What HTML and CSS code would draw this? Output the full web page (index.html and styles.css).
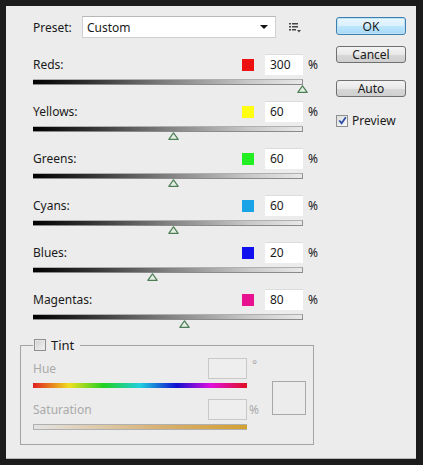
FILE: index.html
```html
<!DOCTYPE html>
<html>
<head>
<meta charset="utf-8">
<link rel="stylesheet" href="styles.css">
</head>
<body>
<div class="dialog">
  <div class="main">
    <div class="preset-row">
      <span class="preset-label">Preset:</span>
      <div class="select"><span>Custom</span><span class="arrow"></span></div>
      <svg class="menu-icon" width="12" height="10" viewBox="0 0 12 10">
        <rect x="0" y="0" width="2" height="1.5" fill="#444"/><rect x="3" y="0" width="6" height="1.5" fill="#444"/>
        <rect x="0" y="3" width="2" height="1.5" fill="#444"/><rect x="3" y="3" width="6" height="1.5" fill="#444"/>
        <rect x="0" y="6" width="2" height="1.5" fill="#444"/><rect x="3" y="6" width="4" height="1.5" fill="#444"/>
        <polygon points="8,7 12,7 10,9.5" fill="#444"/>
      </svg>
    </div>

    <div class="adj">
      <div class="adj-head"><span class="lbl">Reds:</span><span class="sw" style="background:#ee1111"></span><span class="val">300</span><span class="pct">%</span></div>
      <div class="slider"></div>
      <div class="thumb-track"><svg class="thumb" style="left:264px" width="11" height="8" viewBox="0 0 11 8"><path d="M5.5 0.8 L10.2 7.3 L0.8 7.3 Z" fill="#e4f0e4" stroke="#4d7d55" stroke-width="1.2" stroke-linejoin="round"/></svg></div>
    </div>
    <div class="adj">
      <div class="adj-head"><span class="lbl">Yellows:</span><span class="sw" style="background:#ffff11"></span><span class="val">60</span><span class="pct">%</span></div>
      <div class="slider"></div>
      <div class="thumb-track"><svg class="thumb" style="left:135px" width="11" height="8" viewBox="0 0 11 8"><path d="M5.5 0.8 L10.2 7.3 L0.8 7.3 Z" fill="#e4f0e4" stroke="#4d7d55" stroke-width="1.2" stroke-linejoin="round"/></svg></div>
    </div>
    <div class="adj">
      <div class="adj-head"><span class="lbl">Greens:</span><span class="sw" style="background:#22ee22"></span><span class="val">60</span><span class="pct">%</span></div>
      <div class="slider"></div>
      <div class="thumb-track"><svg class="thumb" style="left:135px" width="11" height="8" viewBox="0 0 11 8"><path d="M5.5 0.8 L10.2 7.3 L0.8 7.3 Z" fill="#e4f0e4" stroke="#4d7d55" stroke-width="1.2" stroke-linejoin="round"/></svg></div>
    </div>
    <div class="adj">
      <div class="adj-head"><span class="lbl">Cyans:</span><span class="sw" style="background:#1aa4e8"></span><span class="val">60</span><span class="pct">%</span></div>
      <div class="slider"></div>
      <div class="thumb-track"><svg class="thumb" style="left:135px" width="11" height="8" viewBox="0 0 11 8"><path d="M5.5 0.8 L10.2 7.3 L0.8 7.3 Z" fill="#e4f0e4" stroke="#4d7d55" stroke-width="1.2" stroke-linejoin="round"/></svg></div>
    </div>
    <div class="adj">
      <div class="adj-head"><span class="lbl">Blues:</span><span class="sw" style="background:#1010ee"></span><span class="val">20</span><span class="pct">%</span></div>
      <div class="slider"></div>
      <div class="thumb-track"><svg class="thumb" style="left:114px" width="11" height="8" viewBox="0 0 11 8"><path d="M5.5 0.8 L10.2 7.3 L0.8 7.3 Z" fill="#e4f0e4" stroke="#4d7d55" stroke-width="1.2" stroke-linejoin="round"/></svg></div>
    </div>
    <div class="adj">
      <div class="adj-head"><span class="lbl">Magentas:</span><span class="sw" style="background:#e81190"></span><span class="val">80</span><span class="pct">%</span></div>
      <div class="slider"></div>
      <div class="thumb-track"><svg class="thumb" style="left:146px" width="11" height="8" viewBox="0 0 11 8"><path d="M5.5 0.8 L10.2 7.3 L0.8 7.3 Z" fill="#e4f0e4" stroke="#4d7d55" stroke-width="1.2" stroke-linejoin="round"/></svg></div>
    </div>

    <fieldset class="tint">
      <legend><span class="cb cb-off"></span><span class="tint-lbl">Tint</span></legend>
      <div class="tint-grid">
        <div class="t-head"><span class="dis">Hue</span><span class="dis-input"></span></div>
        <div class="unit deg">°</div>
        <div class="preview-sq"></div>
        <div class="hue-bar"></div>
        <div></div>
        <div class="t-head sat-head"><span class="dis">Saturation</span><span class="dis-input"></span></div>
        <div class="unit pc sat-head">%</div>
        <div class="sat-bar"></div>
        <div></div>
      </div>
    </fieldset>
  </div>

  <div class="side">
    <div class="btn btn-ok">OK</div>
    <div class="btn">Cancel</div>
    <div class="btn btn-auto">Auto</div>
    <div class="check-row"><span class="cb cb-on"><svg width="9" height="9" viewBox="0 0 9 9"><path d="M1.2 4.5 L3.6 7.2 L7.8 1.2" fill="none" stroke="#2f4fa8" stroke-width="1.8"/></svg></span><span>Preview</span></div>
  </div>
</div>
</body>
</html>
```

FILE: styles.css
```css
html, body {
  margin: 0;
  padding: 0;
}
body {
  width: 423px;
  height: 465px;
  background: #1c1c1c;
  font-family: "Noto Sans", "Open Sans", sans-serif;
  font-size: 12px;
  color: #1a1a1a;
  overflow: hidden;
}
.dialog {
  margin: 6px 0 0 6px;
  width: 410px;
  height: 453px;
  background: #ececec;
  border-bottom: 1px solid #b8b8b8;
  box-sizing: border-box;
  display: flex;
  padding: 10px 0 0 14px;
}
.main {
  width: 300px;
  display: flex;
  flex-direction: column;
}
.preset-row {
  display: flex;
  align-items: center;
  height: 22px;
  padding-left: 13px;
}
.preset-label {
  width: 49px;
}
.select {
  width: 194px;
  height: 22px;
  box-sizing: border-box;
  background: #fff;
  border: 1px solid #d0d0d0;
  border-top-color: #b8b8b8;
  display: flex;
  align-items: center;
  justify-content: space-between;
  padding: 0 4px 0 4px;
}
.arrow {
  width: 0;
  height: 0;
  border-left: 4px solid transparent;
  border-right: 4px solid transparent;
  border-top: 4px solid #111;
  margin-right: 3px;
}
.menu-icon {
  margin-left: 13px;
  margin-top: 2px;
}
.adj {
  padding-left: 13px;
  height: 47px;
  display: flex;
  flex-direction: column;
}
.preset-row + .adj {
  margin-top: 16px;
}
.adj-head {
  display: flex;
  align-items: center;
  height: 21px;
}
.lbl {
  flex: 1;
}
.sw {
  width: 12px;
  height: 12px;
  margin-right: 11px;
}
.val {
  width: 38px;
  height: 21px;
  box-sizing: border-box;
  background: #fff;
  border-top: 1px solid #dcdcdc;
  padding-left: 5px;
  line-height: 20px;
}
.pct {
  width: 17px;
  padding-left: 5px;
  box-sizing: border-box;
}
.slider {
  margin-top: 4px;
  width: 270px;
  height: 6px;
  box-sizing: border-box;
  background: linear-gradient(to right, #000 0%, #2e2e2e 20%, #808080 50%, #c8c8c8 80%, #e8e8e8 100%);
  border-right: 1px solid #909090;
  border-bottom: 1px solid #8a8a8a;
  border-top: 1px solid #b0b0b0;
}
.thumb-track {
  position: relative;
  height: 16px;
  width: 270px;
}
.thumb {
  position: absolute;
  top: 0px;
  display: block;
}
.tint {
  margin: 2px 0 0 0;
  width: 294px;
  height: 107px;
  box-sizing: border-box;
  border: 1px solid #a4a4a4;
  padding: 0 0 0 12px;
  min-width: 0;
}
.tint legend {
  padding: 0 6px 0 1px;
  display: flex;
  align-items: center;
  height: 14px;
}
.tint-lbl {
  margin-left: 5px;
  font-size: 13px;
}
.cb {
  width: 12px;
  height: 12px;
  box-sizing: border-box;
  border: 1px solid #8e8f8f;
  display: inline-flex;
  align-items: center;
  justify-content: center;
}
.cb-off {
  background: linear-gradient(135deg, #cfcfcf, #f4f4f4);
  box-shadow: inset 0 0 0 1px #e8e8e8;
}
.cb-on {
  background: linear-gradient(135deg, #dcdcdc, #fafafa);
}
.tint-grid {
  display: grid;
  grid-template-columns: 214px 25px 34px;
  margin-top: 6px;
}
.t-head {
  display: flex;
  align-items: center;
  height: 21px;
}
.dis {
  flex: 1;
  color: #aaaaaa;
}
.dis-input {
  width: 39px;
  height: 21px;
  box-sizing: border-box;
  border: 1px solid #c8c8c8;
  background: #eeeeee;
}
.unit {
  color: #aaaaaa;
}
.deg {
  padding-left: 5px;
  line-height: 14px;
}
.pc {
  padding-left: 2px;
  display: flex;
  align-items: center;
  height: 21px;
}
.preview-sq {
  grid-row: 1 / 5;
  grid-column: 3;
  width: 34px;
  height: 34px;
  box-sizing: border-box;
  border: 1px solid #a8a8a8;
  margin-top: 23px;
}
.hue-bar {
  margin-top: 4px;
  height: 5px;
  background: linear-gradient(to right, #e02020, #f0e020 17%, #20d020 33%, #20d0e0 50%, #1010d0 67%, #e010e0 83%, #e01020);
}
.sat-head {
  margin-top: 11px;
}
.sat-bar {
  margin-top: 4px;
  height: 6px;
  box-sizing: border-box;
  border: 1px solid #b0b0b0;
  border-right: none;
  background: linear-gradient(to right, #e4e4e4, #d8b070 60%, #d4a030);
}
.side {
  margin-left: 16px;
  margin-top: 1px;
  display: flex;
  flex-direction: column;
  width: 70px;
}
.btn {
  width: 70px;
  height: 17px;
  box-sizing: border-box;
  border: 1px solid #707070;
  border-radius: 3px;
  background: linear-gradient(#f4f4f4 0%, #e8e8e8 50%, #d8d8d8 51%, #cfcfcf 100%);
  display: flex;
  align-items: center;
  justify-content: center;
  font-size: 12px;
  margin-bottom: 11px;
}
.btn-ok {
  height: 18px;
  border: 1px solid #3c7fb1;
  background: linear-gradient(#eaf6fd 0%, #d9f0fc 50%, #bee6fd 51%, #a7d9f5 100%);
  box-shadow: 0 0 0 1px #c0e0f4 inset;
}
.btn-auto {
  margin-top: 6px;
  margin-bottom: 15px;
}
.check-row {
  display: flex;
  align-items: center;
  gap: 4px;
}
```
